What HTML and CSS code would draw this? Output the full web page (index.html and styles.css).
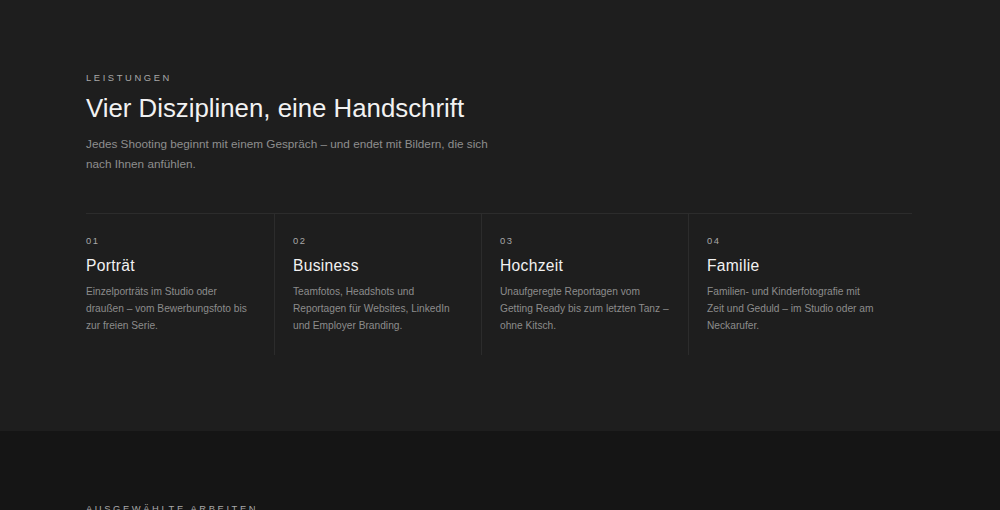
FILE: index.html
```html
<!DOCTYPE html>
<html lang="de">

<head>
	<title>Leistungen</title>
	<meta charset=utf-8>
	<meta name=viewport content="width=device-width, initial-scale=1">
	<link rel="stylesheet" href="styles.css">
</head>

<body>
	<section class="services">
		<div class="wrap">
			<div class="eyebrow">Leistungen</div>
			<h2 class="title">Vier Disziplinen, eine Handschrift</h2>
			<p class="lead">Jedes Shooting beginnt mit einem Gespräch – und endet mit Bildern, die sich nach Ihnen anfühlen.</p>

			<div class="grid">
				<div class="card">
					<div class="num">01</div>
					<h3>Porträt</h3>
					<p>Einzelporträts im Studio oder draußen – vom Bewerbungsfoto bis zur freien Serie.</p>
				</div>
				<div class="card">
					<div class="num">02</div>
					<h3>Business</h3>
					<p>Teamfotos, Headshots und Reportagen für Websites, LinkedIn und Employer Branding.</p>
				</div>
				<div class="card">
					<div class="num">03</div>
					<h3>Hochzeit</h3>
					<p>Unaufgeregte Reportagen vom Getting Ready bis zum letzten Tanz – ohne Kitsch.</p>
				</div>
				<div class="card">
					<div class="num">04</div>
					<h3>Familie</h3>
					<p>Familien- und Kinderfotografie mit Zeit und Geduld – im Studio oder am Neckarufer.</p>
				</div>
			</div>
		</div>
	</section>

	<section class="works">
		<div class="wrap">
			<div class="eyebrow">Ausgewählte Arbeiten</div>
		</div>
	</section>
</body>

</html>
```

FILE: styles.css
```css
body {
	margin: 0;
	font-family: "Liberation Sans", Arial, sans-serif;
	background: #151515;
	color: #eee;
}

.wrap {
	width: 826px;
	padding-left: 86px;
}

.services {
	background: #1e1e1e;
	padding: 72px 0 76px;
}

.works {
	background: #151515;
	padding: 72px 0 60px;
}

.eyebrow {
	font-size: 9.4px;
	line-height: 12px;
	letter-spacing: 2.6px;
	text-transform: uppercase;
	color: #a8a8a8;
	margin-bottom: 9px;
}

.title {
	font-size: 25.8px;
	line-height: 30px;
	font-weight: 400;
	color: #f2f2f2;
	margin: 0 0 11px;
}

.lead {
	font-size: 11.75px;
	line-height: 20px;
	color: #8e8e8e;
	width: 420px;
	margin: 0;
}

.grid {
	margin-top: 39px;
	border-top: 1px solid #2c2c2c;
	display: grid;
	grid-template-columns: repeat(4, 189px);
	column-gap: 18px;
}

.card {
	padding: 21px 18px 21px 0;
	border-right: 1px solid #2c2c2c;
}

.card:last-child {
	border-right: none;
}

.num {
	font-size: 9.4px;
	line-height: 12px;
	letter-spacing: 1.6px;
	color: #a8a8a8;
	margin-bottom: 8px;
}

.card h3 {
	font-size: 15.6px;
	line-height: 20px;
	font-weight: 400;
	letter-spacing: 0.02em;
	color: #f2f2f2;
	margin: 0 0 7px;
	padding-top: 1px;
}

.card p {
	font-size: 10.2px;
	line-height: 17px;
	color: #8c8c8c;
	margin: 0;
}
```
